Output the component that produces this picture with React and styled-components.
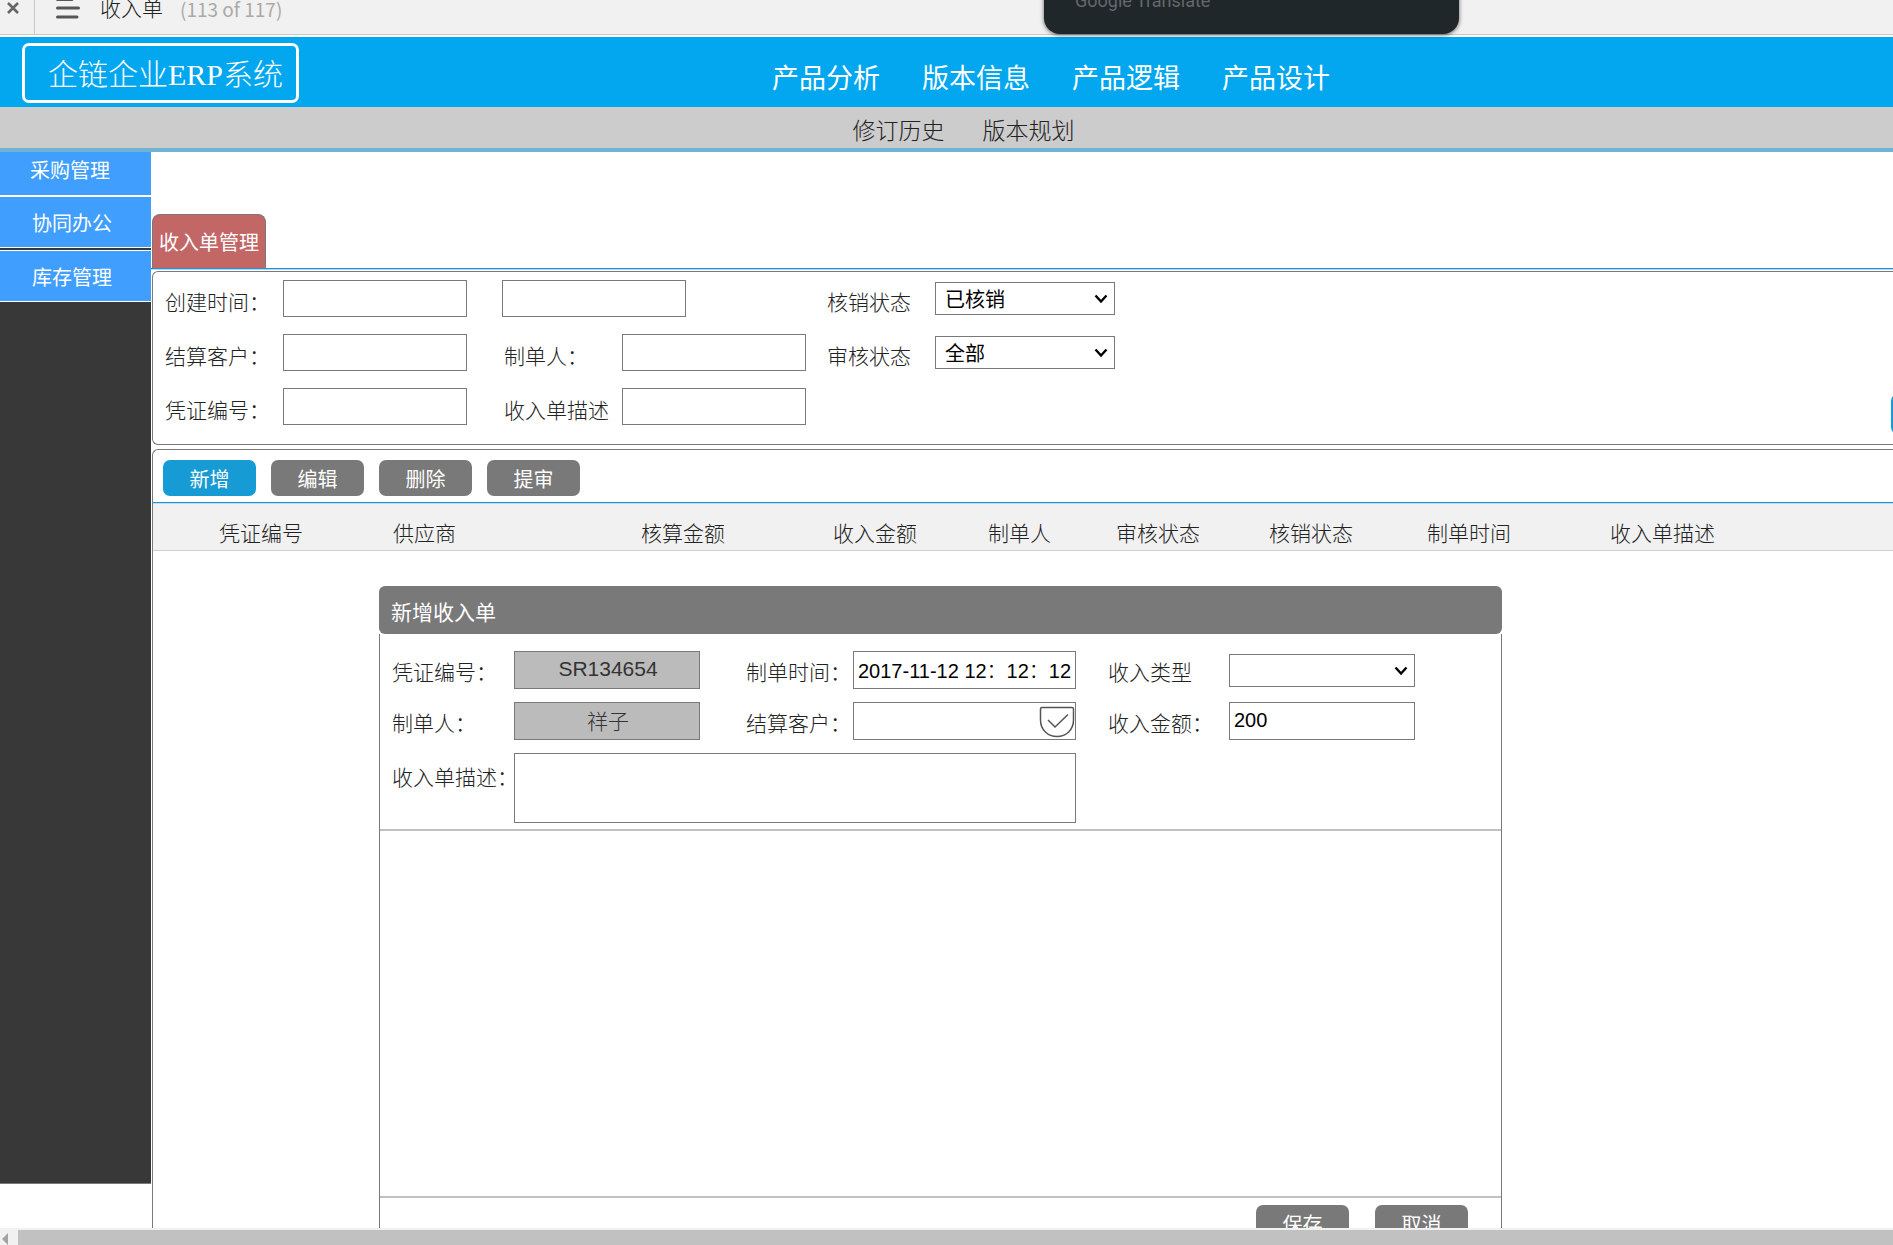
import React, { useState } from "react";
import styled, { createGlobalStyle } from "styled-components";

const topLinks = ["产品分析", "版本信息", "产品逻辑", "产品设计"];
const subLinks = ["修订历史", "版本规划"];

const columns = [
  { name: "凭证编号", width: 240 },
  { name: "供应商", width: 248 },
  { name: "核算金额", width: 192 },
  { name: "收入金额", width: 155 },
  { name: "制单人", width: 128 },
  { name: "审核状态", width: 153 },
  { name: "核销状态", width: 158 },
  { name: "制单时间", width: 183 },
  { name: "收入单描述" },
];

function Select({ id, options, width, value, onChange, label }) {
  return (
    <SelectBox $width={width}>
      <select id={id} value={value} onChange={onChange} aria-label={label}>
        {options.map((option) => (
          <option key={option} value={option}>
            {option}
          </option>
        ))}
      </select>
      <svg width="14" height="10" viewBox="0 0 14 10" fill="none">
        <path d="M1.5 1.5L7 7.5L12.5 1.5" stroke="#000" strokeWidth="2.4" />
      </svg>
    </SelectBox>
  );
}

function PlayerBar() {
  return (
    <StyledPlayerBar>
      <button className="close" aria-label="关闭">
        <svg width="14" height="14" viewBox="0 0 14 14" fill="none">
          <path d="M2 2L12 12M12 2L2 12" stroke="#666" strokeWidth="2.6" />
        </svg>
      </button>
      <button className="menu" aria-label="目录">
        <svg width="24" height="22" viewBox="0 0 24 22" fill="none">
          <path
            d="M1.5 2.5H16M1.5 11H22.5M1.5 20H21"
            stroke="#555"
            strokeWidth="3"
            strokeLinecap="round"
          />
        </svg>
      </button>
      <h1>收入单</h1>
      <span>(113 of 117)</span>
    </StyledPlayerBar>
  );
}

function Header() {
  return (
    <>
      <StyledHeader>
        <Logo href="#">企链企业ERP系统</Logo>
        <nav>
          {topLinks.map((link) => (
            <a href="#" key={link}>
              {link}
            </a>
          ))}
        </nav>
      </StyledHeader>
      <SubNav>
        {subLinks.map((link) => (
          <a href="#" key={link}>
            {link}
          </a>
        ))}
      </SubNav>
    </>
  );
}

function Filters() {
  const [verify, setVerify] = useState("已核销");
  const [audit, setAudit] = useState("全部");

  return (
    <FilterPanel>
      <FieldColumn>
        <Field $label={118}>
          <label htmlFor="createdFrom">创建时间：</label>
          <TextInput id="createdFrom" />
        </Field>
        <Field $label={118}>
          <label htmlFor="customer">结算客户：</label>
          <TextInput id="customer" />
        </Field>
        <Field $label={118}>
          <label htmlFor="voucher">凭证编号：</label>
          <TextInput id="voucher" />
        </Field>
      </FieldColumn>
      <FieldColumn $before={35}>
        <Field>
          <TextInput aria-label="创建时间止" />
        </Field>
        <Field $label={118} $indent={2}>
          <label htmlFor="maker">制单人：</label>
          <TextInput id="maker" />
        </Field>
        <Field $label={118} $indent={2}>
          <label htmlFor="remark">收入单描述</label>
          <TextInput id="remark" />
        </Field>
      </FieldColumn>
      <FieldColumn $before={21}>
        <Field $label={108}>
          <label htmlFor="verify">核销状态</label>
          <Select
            id="verify"
            width={180}
            options={["已核销", "未核销"]}
            value={verify}
            onChange={(e) => setVerify(e.target.value)}
          />
        </Field>
        <Field $label={108}>
          <label htmlFor="audit">审核状态</label>
          <Select
            id="audit"
            width={180}
            options={["全部", "已审核"]}
            value={audit}
            onChange={(e) => setAudit(e.target.value)}
          />
        </Field>
      </FieldColumn>
      <SearchButton aria-label="查询" />
    </FilterPanel>
  );
}

function IncomeDialog() {
  const [time, setTime] = useState("2017-11-12 12：12：12");
  const [amount, setAmount] = useState("200");
  const [type, setType] = useState("");

  return (
    <StyledDialog role="dialog" aria-labelledby="dialogTitle">
      <h2 id="dialogTitle">新增收入单</h2>
      <div className="dialog_body">
        <DialogForm>
          <label htmlFor="dVoucher">凭证编号：</label>
          <DialogInput id="dVoucher" $locked readOnly value="SR134654" />
          <label className="second" htmlFor="dTime">
            制单时间：
          </label>
          <DialogInput
            id="dTime"
            value={time}
            onChange={(e) => setTime(e.target.value)}
          />
          <label className="third" htmlFor="dType">
            收入类型
          </label>
          <Select
            id="dType"
            width={186}
            options={["", "销售收入"]}
            value={type}
            onChange={(e) => setType(e.target.value)}
          />

          <label htmlFor="dMaker">制单人：</label>
          <DialogInput id="dMaker" $locked readOnly value="祥子" />
          <label className="second" htmlFor="dCustomer">
            结算客户：
          </label>
          <CustomerBox>
            <DialogInput id="dCustomer" />
            <button type="button" aria-label="选择客户">
              <svg width="36" height="32" viewBox="0 0 36 32" fill="none">
                <path
                  d="M3 1.5H33Q34.5 1.5 34.5 3V14C34.5 24 27 30.5 18 30.5S1.5 24 1.5 14V3Q1.5 1.5 3 1.5Z"
                  stroke="#555"
                  strokeWidth="1.5"
                />
                <path d="M9 14L16 21L29 8.5" stroke="#555" strokeWidth="1.5" />
              </svg>
            </button>
          </CustomerBox>
          <label className="third" htmlFor="dAmount">
            收入金额：
          </label>
          <DialogInput
            id="dAmount"
            value={amount}
            onChange={(e) => setAmount(e.target.value)}
          />

          <label className="top" htmlFor="dRemark">
            收入单描述：
          </label>
          <textarea id="dRemark" />
        </DialogForm>
        <div className="dialog_detail" />
        <div className="dialog_footer">
          <Button>保存</Button>
          <Button>取消</Button>
        </div>
      </div>
    </StyledDialog>
  );
}

export default function App() {
  return (
    <>
      <GlobalStyle />
      <Page>
        <PlayerBar />
        <TranslateBubble>Google Translate</TranslateBubble>
        <Header />
        <Workspace>
          <Sidebar>
            <a className="first" href="#">
              采购管理
            </a>
            <a href="#">协同办公</a>
            <a href="#">库存管理</a>
          </Sidebar>
          <Content>
            <TabStrip>
              <button>收入单管理</button>
            </TabStrip>
            <Filters />
            <Toolbar>
              <Button $primary>新增</Button>
              <Button>编辑</Button>
              <Button>删除</Button>
              <Button>提审</Button>
            </Toolbar>
            <ListArea>
              <table>
                <colgroup>
                  {columns.map((column) => (
                    <col key={column.name} width={column.width} />
                  ))}
                </colgroup>
                <thead>
                  <tr>
                    {columns.map((column) => (
                      <th key={column.name}>{column.name}</th>
                    ))}
                  </tr>
                </thead>
              </table>
              <IncomeDialog />
            </ListArea>
          </Content>
        </Workspace>
        <ScrollTrack>
          <svg width="8" height="12" viewBox="0 0 8 12">
            <path d="M8 0V12L2 6Z" fill="#a3a3a3" />
          </svg>
          <div />
        </ScrollTrack>
      </Page>
    </>
  );
}

const GlobalStyle = createGlobalStyle`
  * {
    box-sizing: border-box;
  }

  body {
    margin: 0;
    background: #fff;
    color: #222;
    font-family: "Liberation Sans", "Noto Sans CJK SC", sans-serif;
    font-size: 21px;
    font-weight: 300;
  }

  a {
    color: inherit;
    text-decoration: none;
  }

  button,
  input,
  select,
  textarea {
    font: inherit;
    font-size: 20px;
    margin: 0;
    outline: none;
  }

  button {
    cursor: pointer;
    border: none;
    padding: 0;
    background: none;
  }
`;

const Page = styled.div`
  position: relative;
  display: flex;
  flex-direction: column;
  height: 100vh;
  overflow: hidden;
`;

/* the bar is scrolled partly out of the window */
const StyledPlayerBar = styled.div`
  flex: none;
  display: flex;
  align-items: center;
  height: 53px;
  margin-top: -18px;
  margin-bottom: 2px;
  background: #f1f1f1;
  border-bottom: 1px solid #c8c8c8;

  button {
    display: flex;
    align-items: center;
  }

  .close {
    width: 35px;
    height: 100%;
    padding-left: 6px;
    border-right: 1px solid #c8c8c8;
  }

  .menu {
    margin-left: 21px;
  }

  h1 {
    margin: 0 17px 0 20px;
    padding-bottom: 2px;
    font-size: 21px;
    font-weight: 300;
  }

  span {
    color: #aaa;
    font-family: "Noto Sans CJK SC", sans-serif;
    font-size: 19px;
    font-weight: 400;
  }
`;

const TranslateBubble = styled.div`
  position: absolute;
  z-index: 2;
  top: -33px;
  left: 1044px;
  display: flex;
  align-items: center;
  width: 415px;
  height: 67px;
  padding-left: 31px;
  border-radius: 16px;
  background: #20272a;
  box-shadow: 0 1px 4px rgba(0, 0, 0, 0.6);
  color: #62686b;
  font-family: Roboto, sans-serif;
  font-size: 18px;
  font-weight: 400;
`;

const StyledHeader = styled.header`
  flex: none;
  display: flex;
  align-items: center;
  height: 70px;
  padding: 2px 0 0 22px;
  background: #02a7f0;
  color: #fff;

  nav {
    display: flex;
    gap: 42px;
    margin-left: 473px;
    padding-top: 6px;
    font-size: 27px;
    font-weight: 400;
  }
`;

const Logo = styled.a`
  width: 277px;
  height: 60px;
  padding-left: 23px;
  border: 3px solid #fff;
  border-radius: 7px;
  font-family: "Liberation Serif", "Noto Sans CJK SC", serif;
  font-size: 30px;
  line-height: 58px;
  white-space: nowrap;
`;

const SubNav = styled.nav`
  flex: none;
  display: flex;
  align-items: center;
  justify-content: center;
  gap: 38px;
  height: 45px;
  padding: 2px 0 0 34px;
  background: #ccc;
  border-bottom: 4px solid #6fb5d3;
  font-size: 23px;
`;

const Workspace = styled.div`
  flex: 1;
  min-height: 0;
  display: flex;
  overflow: hidden;
`;

const Sidebar = styled.aside`
  flex: none;
  display: flex;
  flex-direction: column;
  width: 151px;
  margin-bottom: 44px;
  background: #383838;
  border-bottom: 1px solid #797979;
  color: #fff;
  font-size: 20px;
  font-weight: 400;

  a {
    display: flex;
    align-items: center;
    height: 52px;
    margin-bottom: 2px;
    padding-left: 32px;
    background: #409eff;
    border-top: 1px solid #fff;
    border-bottom: 1px solid #fff;
  }

  .first {
    height: 44px;
    margin: 0;
    padding: 0 0 8px 30px;
    border-top: none;
  }
`;

const Content = styled.main`
  flex: 1;
  min-width: 0;
  display: flex;
  flex-direction: column;
  padding-left: 1px;
`;

const TabStrip = styled.div`
  flex: none;
  padding-top: 62px;
  margin: 0 0 2px -1px;
  padding-left: 1px;
  border-bottom: 1px solid #2a8fd0;
  box-shadow: 0 1px 0 #a8daf2;

  button {
    display: block;
    height: 54px;
    padding: 0 6px;
    background: #c36666;
    border: 1px solid #797979;
    border-bottom: none;
    border-radius: 8px 8px 0 0;
    color: #fff;
    font-weight: 400;
  }
`;

const FilterPanel = styled.form`
  flex: none;
  display: flex;
  align-items: flex-start;
  margin-bottom: 4px;
  padding: 8px 0 8px 12px;
  border: 1px solid #797979;
  border-right: none;
  border-radius: 6px 0 0 6px;
  overflow: hidden;
`;

const FieldColumn = styled.div`
  display: flex;
  flex-direction: column;
  gap: 17px;
  padding-bottom: 11px;
  margin-left: ${(props) => props.$before || 0}px;
`;

const Field = styled.div`
  display: flex;
  align-items: center;
  height: 37px;
  padding-left: ${(props) => props.$indent || 0}px;

  label {
    width: ${(props) => props.$label}px;
    padding-top: 4px;
    white-space: nowrap;
  }
`;

const TextInput = styled.input`
  width: 184px;
  height: 37px;
  padding: 0 4px;
  border: 1px solid #797979;
  background: #fff;
`;

const SelectBox = styled.div`
  position: relative;
  width: ${(props) => props.$width}px;
  height: 33px;

  select {
    width: 100%;
    height: 100%;
    padding: 2px 30px 0 9px;
    appearance: none;
    border: 1px solid #797979;
    border-radius: 0;
    background: #fff;
    color: #000;
    font-weight: 400;
  }

  svg {
    position: absolute;
    right: 7px;
    top: 12px;
    pointer-events: none;
  }
`;

const Button = styled.button`
  width: 93px;
  height: 36px;
  border-radius: 7px;
  background: ${(props) => (props.$primary ? "#169bd5" : "#797979")};
  color: #fff;
  font-weight: 400;
`;

const SearchButton = styled(Button).attrs({ $primary: true, type: "button" })`
  flex: none;
  align-self: flex-end;
  height: 40px;
  margin: 0 -91px 2px auto;
`;

const Toolbar = styled.div`
  flex: none;
  display: flex;
  gap: 15px;
  padding: 10px 10px 6px;
  border-top: 1px solid #797979;
  border-left: 1px solid #797979;
  border-bottom: 1px solid #2a8fd0;
  border-top-left-radius: 6px;
`;

const ListArea = styled.section`
  flex: 1;
  min-height: 0;
  border-left: 1px solid #797979;
  overflow: hidden;

  table {
    width: 100%;
    table-layout: fixed;
    border-collapse: collapse;
    background: #f1f1f1;
    border-top: 1px solid #b5e0f7;
    border-bottom: 1px solid #d0d0d0;
  }

  th {
    height: 47px;
    padding: 10px 0 0;
    font-weight: 300;
    text-align: left;
    white-space: nowrap;
  }

  th:first-child {
    padding-left: 66px;
  }
`;

const StyledDialog = styled.div`
  width: 1123px;
  margin: 35px 0 0 226px;

  h2 {
    height: 48px;
    margin: 0;
    padding: 6px 0 0 12px;
    border-radius: 6px;
    background: #797979;
    color: #fff;
    font-size: 21px;
    font-weight: 400;
    line-height: 42px;
  }

  .dialog_body {
    border: 1px solid #797979;
    border-top: none;
  }

  .dialog_detail {
    min-height: 367px;
    border-bottom: 2px solid #c0c0c0;
  }

  .dialog_footer {
    display: flex;
    justify-content: flex-end;
    gap: 26px;
    padding: 7px 33px 12px;
  }
`;

const DialogForm = styled.form`
  display: grid;
  grid-template-columns: 122px 186px 153px 223px 153px 186px;
  grid-template-rows: 38px 38px 70px;
  row-gap: 13px;
  align-items: center;
  padding: 17px 12px 6px;
  border-bottom: 2px solid #c0c0c0;

  label {
    padding-top: 2px;
    white-space: nowrap;
  }

  .second {
    padding-left: 46px;
  }

  .third {
    padding-left: 32px;
  }

  .top {
    align-self: start;
    padding-top: 8px;
  }

  textarea {
    grid-column: 2 / 5;
    height: 70px;
    padding: 4px;
    border: 1px solid #797979;
    resize: none;
  }
`;

const DialogInput = styled.input`
  width: 100%;
  height: 38px;
  padding: 0 2px 2px 4px;
  border: 1px solid #797979;
  border-radius: 0;
  background: ${(props) => (props.$locked ? "#bbb" : "#fff")};
  color: ${(props) => (props.$locked ? "#333" : "#000")};
  font-size: ${(props) => (props.$locked ? 21 : 20)}px;
  text-align: ${(props) => (props.$locked ? "center" : "left")};
`;

const CustomerBox = styled.div`
  position: relative;

  button {
    position: absolute;
    right: 1px;
    top: 4px;
    display: flex;
  }
`;

const ScrollTrack = styled.div`
  flex: none;
  display: flex;
  align-items: flex-end;
  height: 17px;
  padding-top: 2px;
  background: #f1f1f1;
  overflow: hidden;

  svg {
    flex: none;
    margin-right: 10px;
  }

  div {
    flex: 1;
    height: 15px;
    background: #c1c1c1;
  }
`;
